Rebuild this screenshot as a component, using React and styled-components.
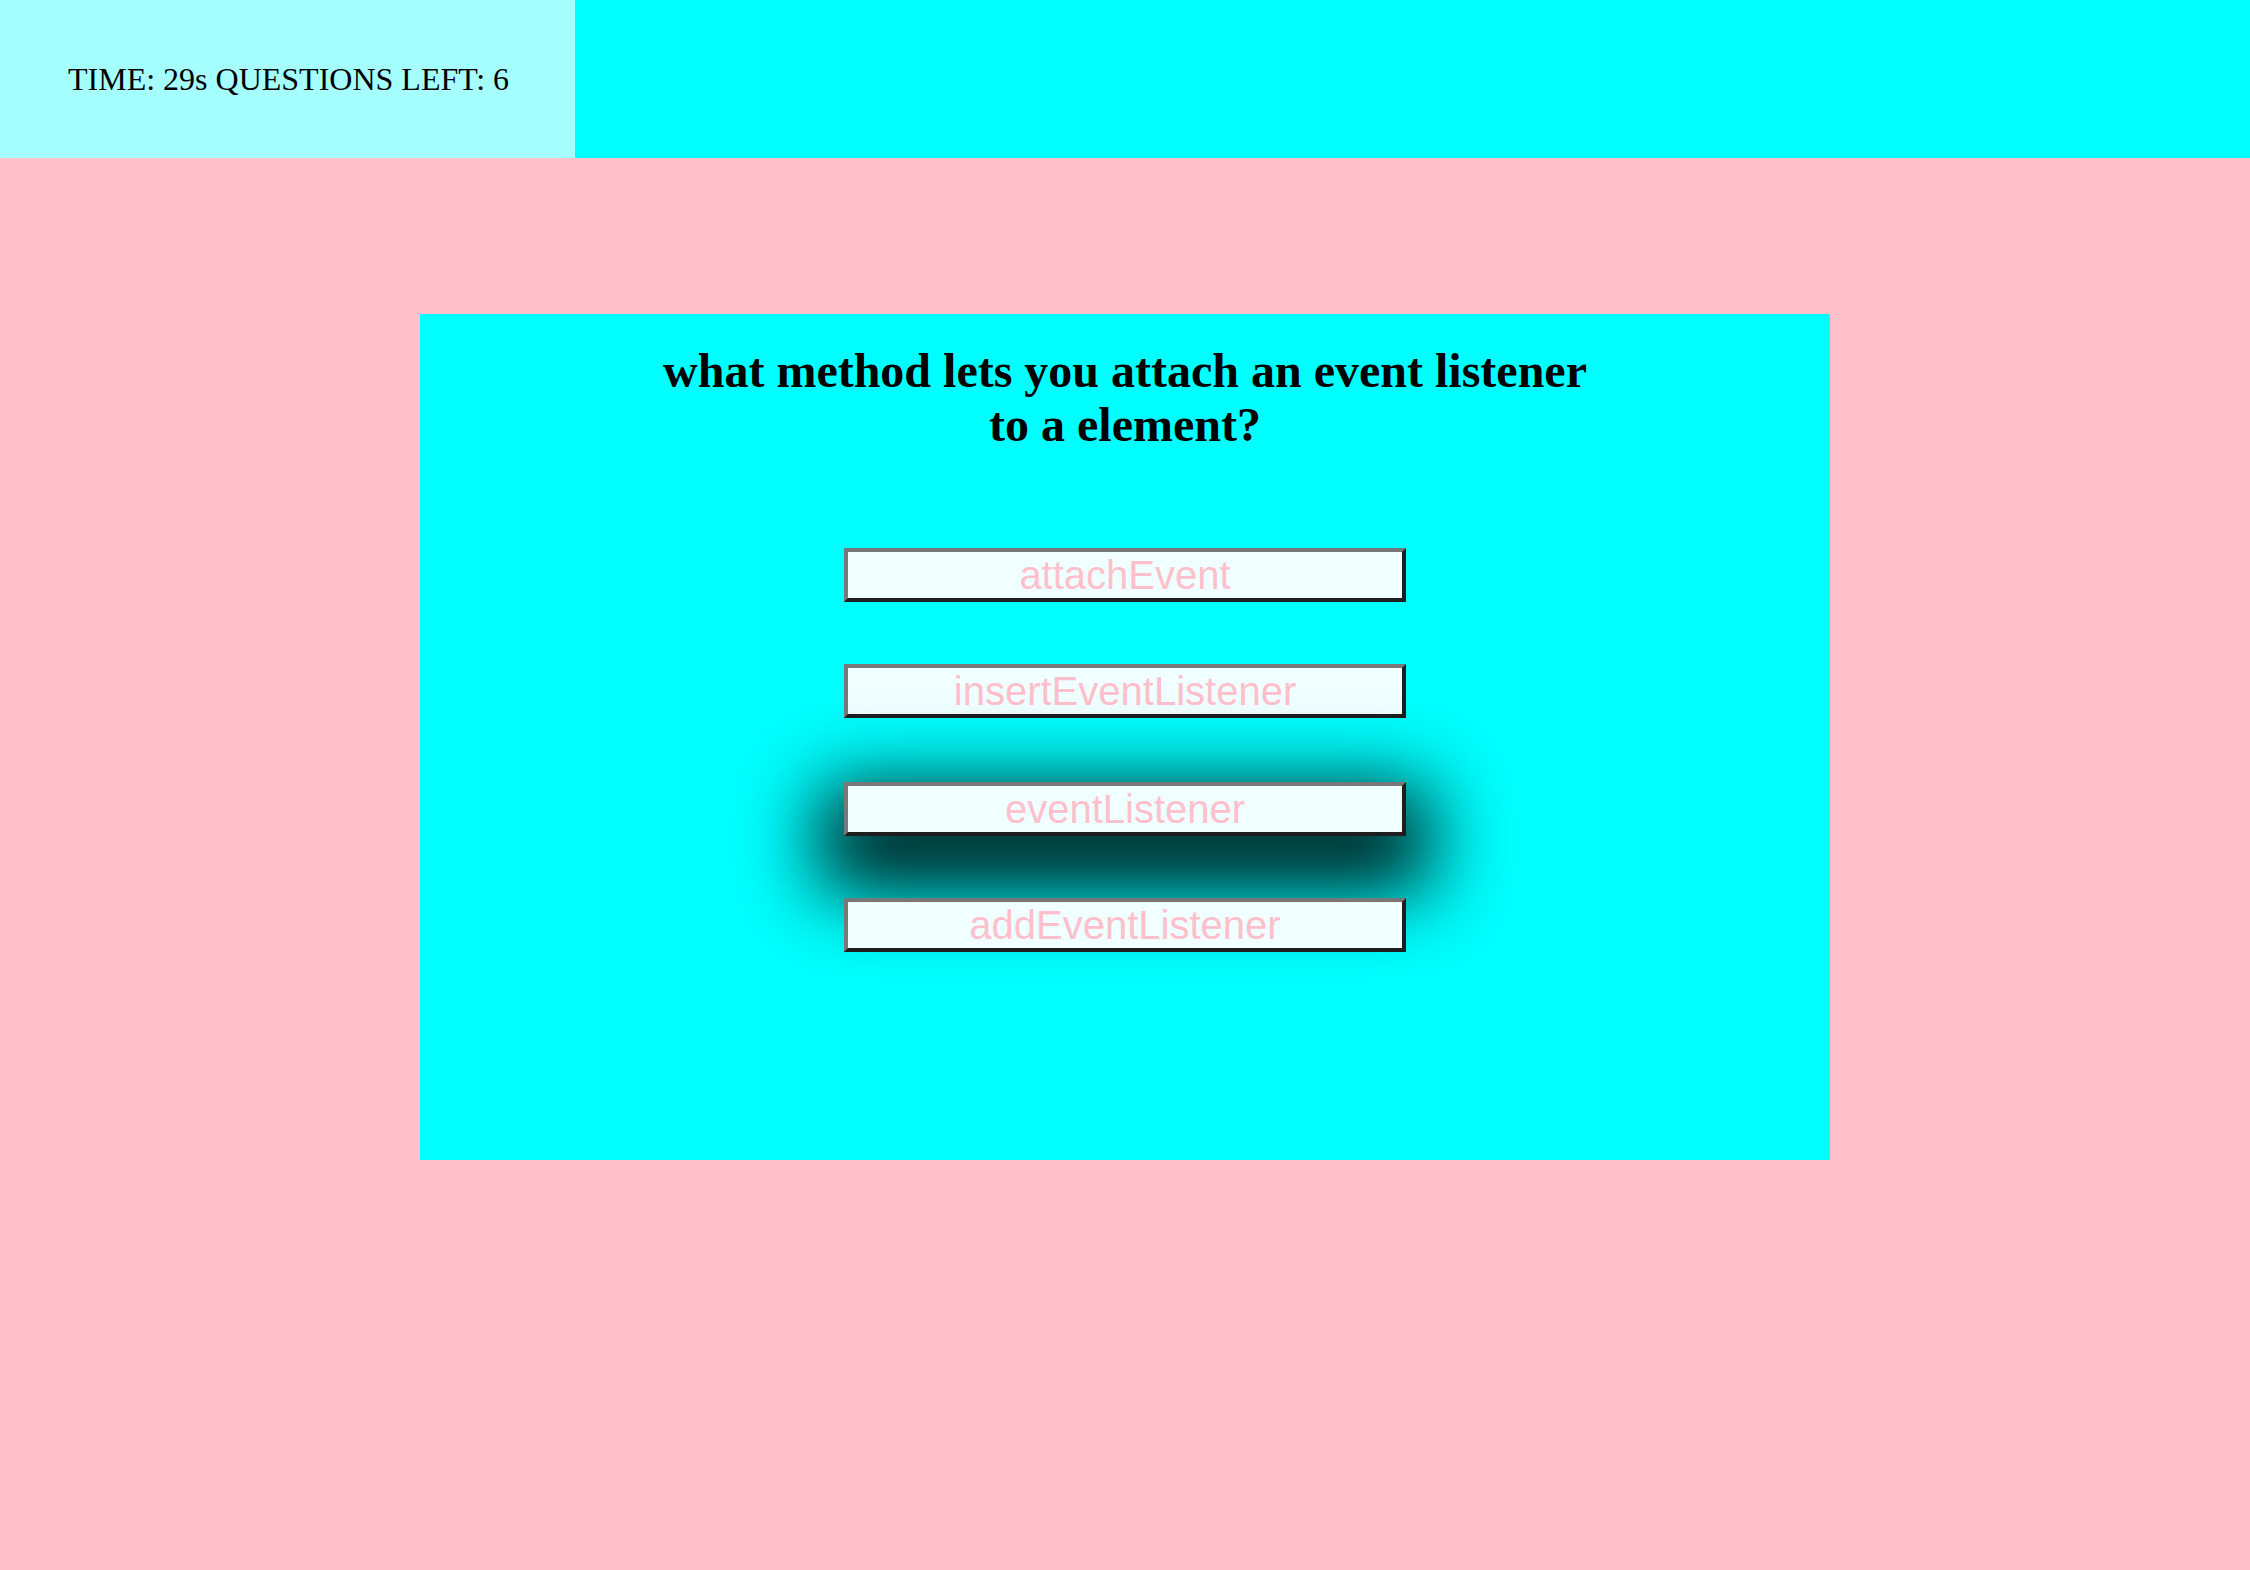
import React from "react";
import styled, { createGlobalStyle } from "styled-components";

const Global = createGlobalStyle`
  html, body {
    margin: 0;
    padding: 0;
    background: #ffc0cb;
  }
  body {
    font-family: "Liberation Serif", "Times New Roman", serif;
    min-height: 1570px;
  }
`;

const Header = styled.header`
  display: flex;
  height: 158px;
  background: #00ffff;
`;

const Status = styled.div`
  display: flex;
  align-items: center;
  width: 575px;
  box-sizing: border-box;
  padding: 0 0 0 68px;
  background: #a5ffff;
  font-family: "Liberation Serif", "Times New Roman", serif;
  font-size: 32px;
  color: #000;
  white-space: nowrap;
`;

const Card = styled.main`
  display: flex;
  flex-direction: column;
  align-items: center;
  width: 1410px;
  height: 846px;
  box-sizing: border-box;
  margin: 156px auto 0;
  padding-top: 30px;
  background: #00ffff;
`;

const Question = styled.h1`
  margin: 0;
  max-width: 950px;
  text-align: center;
  font-family: "Liberation Serif", "Times New Roman", serif;
  font-size: 48px;
  font-weight: bold;
  line-height: 54px;
  color: #000;
`;

const Answers = styled.div`
  display: flex;
  flex-direction: column;
  gap: 62px;
  margin-top: 96px;
`;

const Answer = styled.button`
  width: 562px;
  height: 54px;
  box-sizing: border-box;
  margin-top: ${(p) => (p.$hover ? "2px" : "0")};
  padding: 0;
  border: 4px solid;
  border-color: #787878 #1e1e1e #1e1e1e #787878;
  background: #f0ffff;
  color: #ffc0cb;
  font-family: "Liberation Sans", Arial, sans-serif;
  font-size: 40px;
  line-height: 46px;
  cursor: pointer;
  box-shadow: ${(p) => (p.$hover ? "0 30px 80px 25px rgba(0, 0, 0, 0.9)" : "none")};
`;

const answers = ["attachEvent", "insertEventListener", "eventListener", "addEventListener"];

export default function App() {
  return (
    <>
      <Global />
      <Header>
        <Status>TIME: 29s QUESTIONS LEFT: 6</Status>
      </Header>
      <Card>
        <Question>what method lets you attach an event listener to a element?</Question>
        <Answers>
          {answers.map((a, i) => (
            <Answer key={a} $hover={i === 2}>
              {a}
            </Answer>
          ))}
        </Answers>
      </Card>
    </>
  );
}
